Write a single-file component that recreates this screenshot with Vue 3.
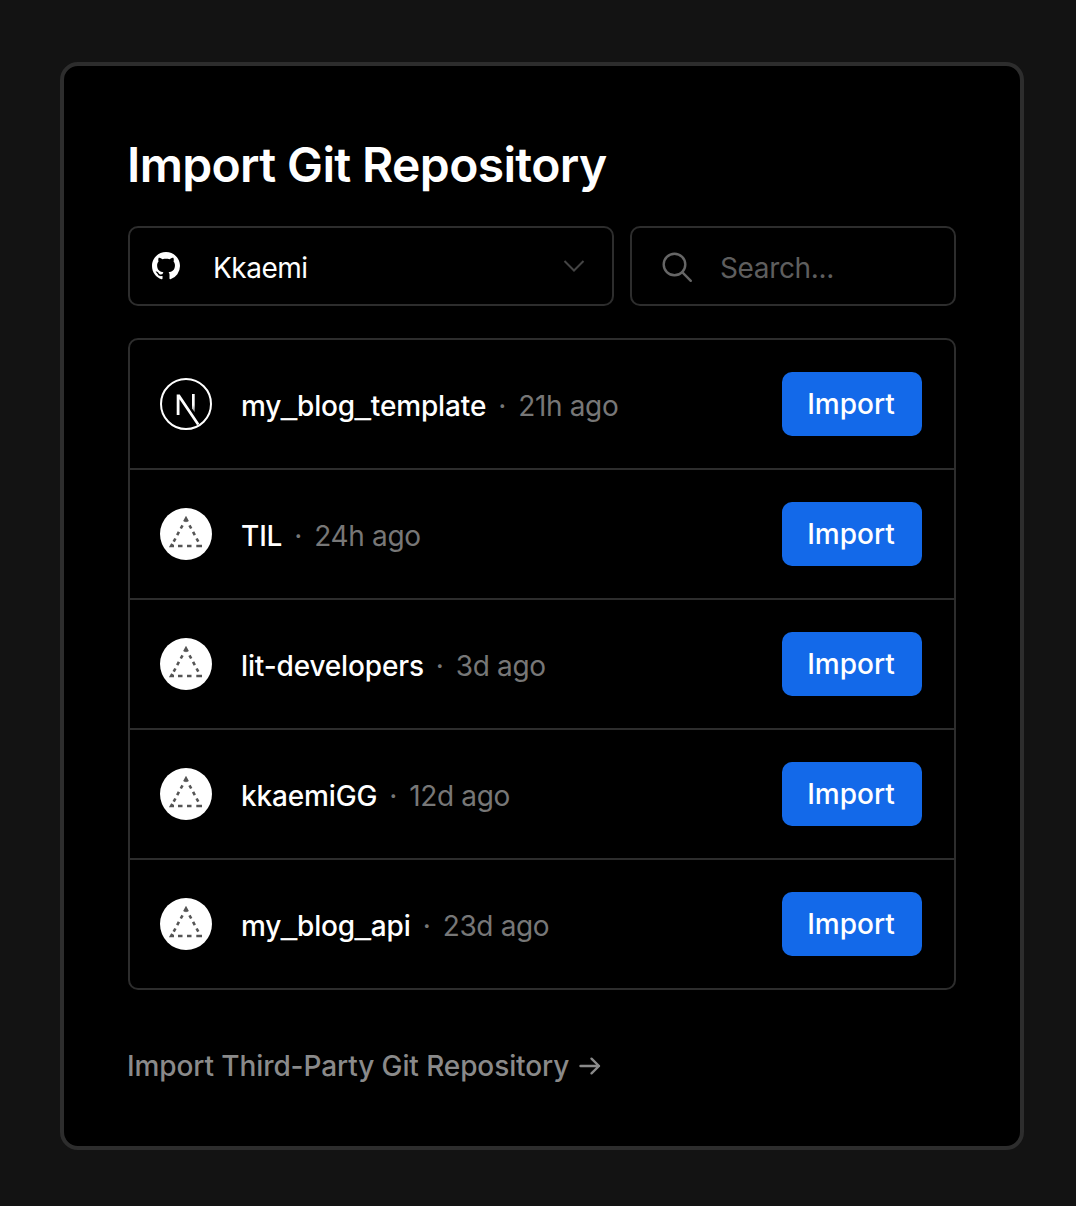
<script setup>
const repositories = [
  { name: 'my_blog_template', age: '21h ago', framework: 'next' },
  { name: 'TIL', age: '24h ago' },
  { name: 'lit-developers', age: '3d ago' },
  { name: 'kkaemiGG', age: '12d ago' },
  { name: 'my_blog_api', age: '23d ago' },
]

// Underscores are set in a wider face, so names are split around them.
const parts = (name) => name.split(/(_)/)
</script>

<template>
  <main class="page">
    <section class="card">
      <h1 class="title">Import Git Repository</h1>

      <div class="filters">
        <button class="account" type="button">
          <svg class="github" viewBox="0 0 16 16" fill="currentColor">
            <path d="M8 0C3.58 0 0 3.58 0 8c0 3.54 2.29 6.53 5.47 7.59.4.07.55-.17.55-.38 0-.19-.01-.82-.01-1.49-2.01.37-2.53-.49-2.69-.94-.09-.23-.48-.94-.82-1.13-.28-.15-.68-.52-.01-.53.63-.01 1.08.58 1.23.82.72 1.21 1.87.87 2.33.66.07-.52.28-.87.51-1.07-1.78-.2-3.64-.89-3.64-3.95 0-.87.31-1.59.82-2.15-.08-.2-.36-1.02.08-2.12 0 0 .67-.21 2.2.82.64-.18 1.32-.27 2-.27s1.36.09 2 .27c1.53-1.04 2.2-.82 2.2-.82.44 1.1.16 1.92.08 2.12.51.56.82 1.27.82 2.15 0 3.07-1.87 3.75-3.65 3.95.29.25.54.73.54 1.48 0 1.07-.01 1.93-.01 2.2 0 .21.15.46.55.38A8.01 8.01 0 0 0 16 8c0-4.42-3.58-8-8-8z" />
          </svg>
          <span class="account-name">Kkaemi</span>
          <svg class="chevron" viewBox="0 0 22 14">
            <path d="M1.500 2 11 11.500 20.500 2" />
          </svg>
        </button>
        <label class="search">
          <svg class="magnifier" viewBox="0 0 32 32">
            <circle cx="13.500" cy="13.500" r="10.800" />
            <path d="m21.200 21.200 8.600 8.600" />
          </svg>
          <span class="placeholder">Search...</span>
        </label>
      </div>

      <ul class="list">
        <li v-for="repo in repositories" :key="repo.name" class="row">
          <svg v-if="repo.framework" class="logo" viewBox="0 0 52 52">
            <defs>
              <linearGradient id="fade" x1="0" y1="0" x2="0" y2="1">
                <stop offset="0.600" stop-color="#fff" />
                <stop offset="1" stop-color="#fff" stop-opacity="0.500" />
              </linearGradient>
            </defs>
            <circle class="ring" cx="26" cy="26" r="25" />
            <path class="letter" d="M16.700 37V16.500h3L39.300 45.700l-2.200 1.500L19.500 21.300V37z" />
            <path fill="url(#fade)" d="M32 16h2.700v18.300L32 30.500z" />
          </svg>
          <svg v-else class="logo" viewBox="0 0 52 52">
            <circle cx="26" cy="26" r="26" fill="#fff" />
            <path class="dashes" d="M24.300 13.600 26 10.500 27.700 13.600M22.500 17.300 20.800 20.500M18.900 23.900 17.200 27.100M15.400 30.500 13.700 33.700M29.500 17.300 31.200 20.500M33.100 23.900 34.800 27.100M36.600 30.500 38.300 33.700M12.300 35.800 11.100 38H14M18 38H22.500M27 38H31.500M36.300 38H42" />
          </svg>
          <span class="name"><span v-for="(part, i) in parts(repo.name)" :key="i" :class="{ underscore: part === '_' }">{{ part }}</span></span>
          <span class="dot">·</span>
          <span class="age">{{ repo.age }}</span>
          <button class="import" type="button">Import</button>
        </li>
      </ul>

      <a class="third-party">
        <span>Import Third-Party Git Repository</span>
        <svg class="arrow" viewBox="0 0 22 18">
          <path d="M1.500 9H20M12.500 1.700 20 9l-7.500 7.300" />
        </svg>
      </a>
    </section>
  </main>
</template>

<style>
body {
  background: #131313;
}
</style>

<style scoped>
.page {
  box-sizing: border-box;
  height: 1206px;
  padding: 62px 52px 56px 60px;
  background: #131313;
  font-family: Inter, sans-serif;
  font-size: 28px;
  color: #fff;
}
.card {
  box-sizing: border-box;
  height: 1088px;
  padding: 67px 64px 0;
  border: 4px solid #2d2d2d;
  border-radius: 18px;
  background: #000;
}
.title {
  margin: 0 0 29px -1px;
  font-size: 48px;
  line-height: 64px;
  font-weight: 600;
  letter-spacing: -0.65px;
  white-space: nowrap;
}
.filters {
  display: flex;
  gap: 16px;
}
.account,
.search {
  box-sizing: border-box;
  display: flex;
  align-items: center;
  height: 80px;
  border: 2px solid #2d2d2d;
  border-radius: 10px;
  background: #000;
  color: inherit;
  font: inherit;
}
.account {
  width: 486px;
  padding: 0 27px 0 22px;
}
.github {
  width: 28px;
  height: 28px;
}
.account-name {
  flex: 1;
  margin: 4px 0 0 33px;
  line-height: 34px;
  text-align: left;
  letter-spacing: -0.5px;
}
.chevron {
  width: 22px;
  height: 14px;
  fill: none;
  stroke: #444;
  stroke-width: 2;
}
.search {
  width: 326px;
  padding-left: 29px;
}
.magnifier {
  width: 32px;
  height: 32px;
  margin-top: 1px;
  fill: none;
  stroke: #666;
  stroke-width: 2.4;
  stroke-linecap: round;
}
.placeholder {
  margin: 4px 0 0 27px;
  line-height: 34px;
  letter-spacing: -0.35px;
  color: #5e5e5e;
}
.list {
  margin: 32px 0 0;
  padding: 0;
  border: 2px solid #2d2d2d;
  border-radius: 10px;
  list-style: none;
}
.row {
  display: flex;
  align-items: center;
  height: 128px;
  padding: 0 32px 0 30px;
}
.row + .row {
  border-top: 2px solid #2d2d2d;
}
.logo {
  width: 52px;
  height: 52px;
  margin-right: 29px;
}
.ring {
  fill: none;
  stroke: #fff;
  stroke-width: 2;
}
.letter {
  fill: #fff;
}
.dashes {
  fill: none;
  stroke: #555;
  stroke-width: 2.6;
}
.name,
.dot,
.age {
  margin-top: 4px;
  line-height: 34px;
  white-space: nowrap;
}
.name {
  font-weight: 500;
  letter-spacing: -0.15px;
}
.underscore {
  position: relative;
  top: -2px;
  font-family: "Liberation Sans", sans-serif;
  font-weight: 400;
  line-height: 1;
  letter-spacing: 0.2px;
  -webkit-text-stroke: 0.4px currentColor;
}
.dot {
  width: 32px;
  text-align: center;
  color: #777;
}
.age {
  letter-spacing: -0.35px;
  color: #777;
}
.import {
  width: 140px;
  height: 64px;
  margin-left: auto;
  padding: 0 2px 0 0;
  border: 0;
  border-radius: 10px;
  background: #1369e9;
  color: #fff;
  font: inherit;
  font-weight: 500;
}
.third-party {
  display: flex;
  align-items: center;
  width: max-content;
  margin: 56px 0 0 -1px;
  line-height: 40px;
  font-weight: 500;
  letter-spacing: -0.1px;
  color: #8a8a8a;
}
.arrow {
  width: 22px;
  height: 18px;
  margin-left: 10px;
  fill: none;
  stroke: currentColor;
  stroke-width: 2.4;
  stroke-linecap: round;
  stroke-linejoin: round;
}
</style>
